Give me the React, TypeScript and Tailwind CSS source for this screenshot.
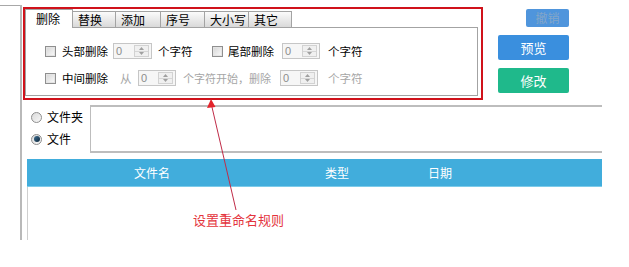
import React from "react";

const Checkbox = ({ className = "" }: { className?: string }) => (
  <div className={`w-[11px] h-[11px] border border-[#8f8f8f] bg-[#f2f2f2] shrink-0 ${className}`}>
    <div className="w-full h-full border border-[#e4e4e4] bg-gradient-to-br from-[#d9d9d9] to-[#f7f7f7]" />
  </div>
);

const Spin = ({ w }: { w: string }) => (
  <div className={`${w} h-[16px] border border-[#c6c6c6] bg-[#f6f6f6] flex shrink-0`}>
    <div className="flex-1 text-[11px] leading-[14px] pl-[2px] text-[#8c8c8c] font-['Liberation_Sans',sans-serif]">
      0
    </div>
    <div className="w-[15px] my-[1px] mr-[2px] flex flex-col border border-[#d2d2d2] bg-[#f0f0f0]">
      <div className="flex-1 flex items-center justify-center border-b border-[#d6d6d6]">
        <svg width="5" height="3" viewBox="0 0 5 3">
          <path d="M0 3 L2.5 0 L5 3Z" fill="#a0a0a0" />
        </svg>
      </div>
      <div className="flex-1 flex items-center justify-center">
        <svg width="5" height="3" viewBox="0 0 5 3">
          <path d="M0 0 L2.5 3 L5 0Z" fill="#a0a0a0" />
        </svg>
      </div>
    </div>
  </div>
);

const Radio = ({ checked }: { checked?: boolean }) => (
  <div className="w-[11px] h-[11px] rounded-full border border-[#8e8e8e] bg-gradient-to-br from-[#dadada] to-[#f8f8f8] flex items-center justify-center shrink-0">
    {checked && <div className="w-[6px] h-[6px] rounded-full bg-gradient-to-br from-[#3d6f93] to-[#10283c]" />}
  </div>
);

const tabs = [
  { label: "替换", w: "w-[43px]" },
  { label: "添加", w: "w-[45px]" },
  { label: "序号", w: "w-[44px]" },
  { label: "大小写", w: "w-[44px]" },
  { label: "其它", w: "w-[43px]" },
];

export default function App() {
  return (
    <div className="relative w-[629px] h-[267px] bg-white overflow-hidden font-['Noto_Sans_CJK_SC',sans-serif] text-[12px] text-black">
      <div className="flex pt-[5px]">
        <div className="w-[21px] h-0 border-t border-[#a8a8a8]" />
        <div className="w-[582px] h-[235px] border-l-2 border-[#b9b9b9] flex flex-col -ml-[1px]">
          {/* top row */}
          <div className="flex">
            <div className="ml-[1px] mt-[2px] w-[460px] h-[93px] border-2 border-[#d0121b] flex flex-col">
              {/* tab strip */}
              <div className="flex items-end h-[18px]">
                <div className="relative z-10 w-[48px] h-[19px] -mb-[1px] bg-white border-l border-t border-r border-[#a3a3a3] pl-[10px] leading-[17px] text-[12px]">
                  删除
                </div>
                {tabs.map((t) => (
                  <div
                    key={t.label}
                    className={`${t.w} h-[16px] border-t border-r border-[#a3a3a3] bg-gradient-to-b from-[#fbfbfb] to-[#d9d9d9] pl-[5px] leading-[15px] text-[12px]`}
                  >
                    {t.label}
                  </div>
                ))}
              </div>
              {/* panel */}
              <div className="w-[453px] h-[69px] border border-[#a3a3a3] bg-white flex flex-col pt-[15px] text-[11.5px]">
                <div className="flex items-center h-[16px]">
                  <Checkbox className="ml-[19px]" />
                  <span className="ml-[6px] w-[51px] leading-[16px]">头部删除</span>
                  <Spin w="w-[39px]" />
                  <span className="ml-[6px] w-[48px] leading-[16px]">个字符</span>
                  <Checkbox className="ml-[6px]" />
                  <span className="ml-[5px] w-[54px] leading-[16px]">尾部删除</span>
                  <Spin w="w-[38px]" />
                  <span className="ml-[8px] leading-[16px]">个字符</span>
                </div>
                <div className="flex items-center h-[16px] mt-[11px]">
                  <Checkbox className="ml-[19px]" />
                  <span className="ml-[6px] w-[58px] leading-[16px]">中间删除</span>
                  <span className="w-[18px] leading-[16px] text-[#a6a6a6]">从</span>
                  <Spin w="w-[38px]" />
                  <span className="ml-[7px] w-[97px] leading-[16px] text-[#a6a6a6] whitespace-nowrap text-[11px]">
                    个字符开始，删除
                  </span>
                  <Spin w="w-[38px]" />
                  <span className="ml-[10px] leading-[16px] text-[#a6a6a6]">个字符</span>
                </div>
              </div>
            </div>
            {/* buttons */}
            <div className="ml-[15px] w-[71px] pt-[4px] flex flex-col items-end">
              <div className="w-[43px] h-[18px] rounded-[2px] bg-[#4f95dc] text-[#84a6c8] text-[12px] leading-[18px] text-center">
                撤销
              </div>
              <div className="mt-[8px] w-[71px] h-[25px] rounded-[2px] bg-[#3a8fde] text-white text-[13px] leading-[25px] text-center">
                预览
              </div>
              <div className="mt-[8px] w-[71px] h-[25px] rounded-[2px] bg-[#1fb98b] text-white text-[13px] leading-[25px] text-center">
                修改
              </div>
            </div>
          </div>

          {/* radios + textbox */}
          <div className="flex mt-[5px]">
            <div className="ml-[9px] w-[59px] pt-[1px] flex flex-col">
              <div className="h-[22px] flex items-center">
                <Radio />
                <span className="ml-[5px]">文件夹</span>
              </div>
              <div className="h-[22px] flex items-center">
                <Radio checked />
                <span className="ml-[5px]">文件</span>
              </div>
            </div>
            <div className="w-[512px] h-[48px] border-y-2 border-l border-[#bdbdbd] bg-white" />
          </div>

          {/* table header */}
          <div className="ml-[5px] mt-[6px] w-[575px] h-[28px] bg-[#41addc] border-b border-[#7ccbea] flex items-center text-white text-[12px]">
            <div className="w-[250px] text-center">文件名</div>
            <div className="w-[120px] text-center">类型</div>
            <div className="w-[86px] text-center">日期</div>
          </div>
          <div className="ml-[5px] flex-1 border-l border-[#cfcfcf]" />
        </div>
      </div>

      {/* annotation arrow */}
      <svg className="absolute inset-0 pointer-events-none" width="629" height="267">
        <line x1="211.5" y1="105" x2="236" y2="210" stroke="#c02c48" strokeWidth="1" />
        <polygon points="211,99 207,108 215.5,107" fill="#e3242b" />
      </svg>
      <div className="absolute left-[193px] top-[211px] text-[13px] leading-[17px] text-[#e4343d] whitespace-nowrap">
        设置重命名规则
      </div>
    </div>
  );
}
